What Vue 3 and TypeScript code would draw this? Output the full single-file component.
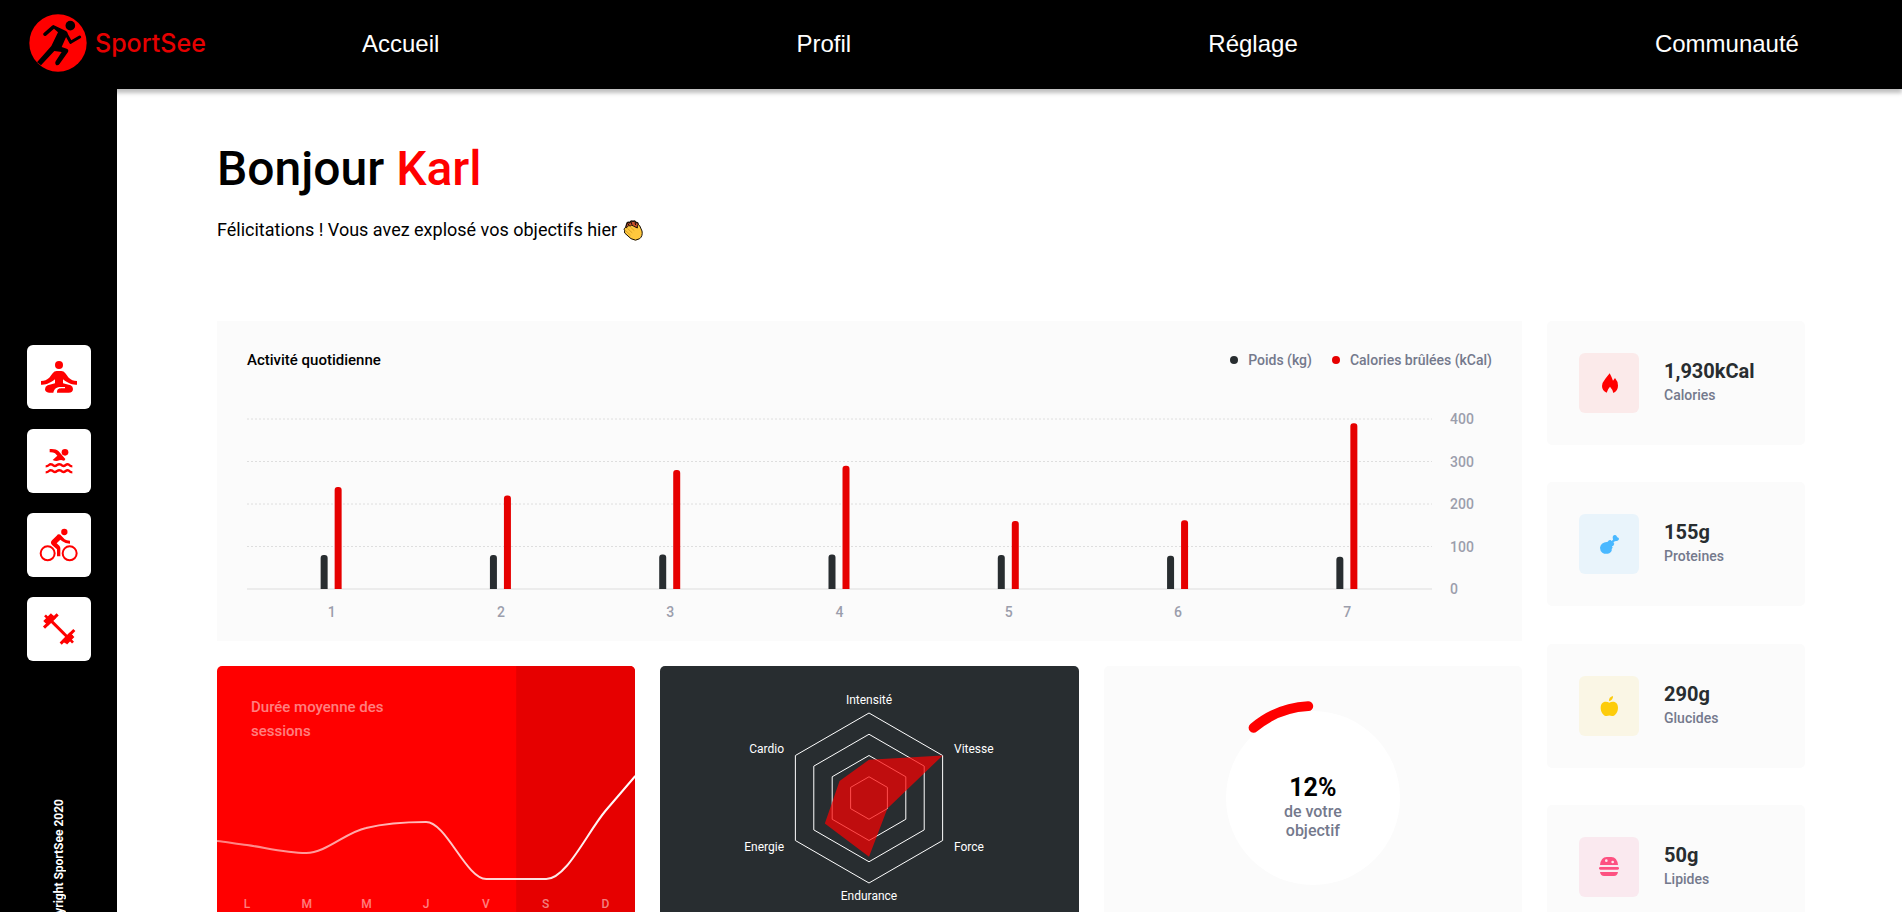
<script setup lang="ts">
interface Day { day: number; kg: number; kcal: number }
interface Fact { value: string; label: string; kind: 'calories' | 'proteins' | 'carbs' | 'fat' }

const links: string[] = ['Accueil', 'Profil', 'Réglage', 'Communauté']

const days: Day[] = [
  { day: 1, kg: 80, kcal: 240 },
  { day: 2, kg: 80, kcal: 220 },
  { day: 3, kg: 81, kcal: 280 },
  { day: 4, kg: 81, kcal: 290 },
  { day: 5, kg: 80, kcal: 160 },
  { day: 6, kg: 78, kcal: 162 },
  { day: 7, kg: 76, kcal: 390 },
]
const ticks: number[] = [400, 300, 200, 100, 0]
const plotTop = 10
const plotHeight = 170
const yOf = (v: number): number => plotTop + plotHeight * (1 - v / 400)
const center = (i: number): string => `${((i + 0.5) * 100) / days.length}%`
const bar = (x: number, v: number): string => {
  const top = yOf(v)
  return `M${x} ${yOf(0)}V${top + 3}a3 3 0 0 1 3 -3h1a3 3 0 0 1 3 3V${yOf(0)}Z`
}

const weekdays: string[] = ['L', 'M', 'M', 'J', 'V', 'S', 'D']

const radius = 85
const point = (i: number, r: number): string => {
  const a = (Math.PI / 3) * i
  return `${(r * Math.sin(a)).toFixed(2)},${(-r * Math.cos(a)).toFixed(2)}`
}
const hexagon = (ratio: number): string => [0, 1, 2, 3, 4, 5].map((i) => point(i, radius * ratio)).join(' ')
const rings: number[] = [0.25, 0.5, 0.75, 1]
const scores: number[] = [0.45, 1, 0.25, 0.69, 0.6, 0.4]
const radarShape = scores.map((s, i) => point(i, radius * s)).join(' ')

const score = 12
const arcPoint = (deg: number): string => {
  const a = (deg * Math.PI) / 180
  return `${(-92 * Math.sin(a)).toFixed(2)} ${(-92 * Math.cos(a)).toFixed(2)}`
}
const arc = `M${arcPoint(3)}A92 92 0 0 0 ${arcPoint(score * 3.6 - 3)}`

const facts: Fact[] = [
  { value: '1,930kCal', label: 'Calories', kind: 'calories' },
  { value: '155g', label: 'Proteines', kind: 'proteins' },
  { value: '290g', label: 'Glucides', kind: 'carbs' },
  { value: '50g', label: 'Lipides', kind: 'fat' },
]
</script>

<template>
  <div class="page">
    <header class="topbar">
      <a class="brand" href="#">
        <svg class="brand-mark" viewBox="86 42 174 174" aria-hidden="true">
          <circle cx="173" cy="129" r="86" fill="#ff0000" />
          <circle cx="210" cy="77" r="14.500" />
          <path d="M159 75L197 93Q203 96 201 103L184 141L199 146Q206 149 203 156L178 191Q173 198 167 195Q162 191 166 184L184 156L162 153L122 196L110 187L153 138L173 97L161 86L137 107Q132 109 129 105Q127 101 131 98L155 77Z" />
          <path d="M197 101L211 127L238 111" fill="none" stroke="#000" stroke-width="9" stroke-linecap="round" stroke-linejoin="round" />
        </svg>
        <span>SportSee</span>
      </a>
      <nav class="nav">
        <a v-for="link in links" :key="link" href="#">{{ link }}</a>
      </nav>
    </header>

    <div class="body">
      <aside class="sidebar">
        <div class="sports">
          <button type="button" aria-label="Yoga">
            <svg viewBox="81 45 192 192">
              <circle cx="177" cy="105" r="12" />
              <path d="M123 153C145 153 150 140 158 130Q163 123 170 123H184Q191 123 196 130C204 140 209 153 231 153V164C212 165 203 158 189 148V160L212 166Q219 169 219 177Q219 188 206 188H171C171 178 175 176 183 175H195V171H183C170 171 163 176 160 188H147Q135 187 135 178Q135 169 143 166L165 160V148C151 158 142 165 123 164Z" />
            </svg>
          </button>
          <button type="button" aria-label="Natation">
            <svg viewBox="81 297 192 192">
              <circle cx="195" cy="367" r="10" />
              <path d="M149 357C162 356 170 358 176 364L196 387Q196 392 190 392Q184 388 178 391Q168 395 158 390L172 377L165 370Q158 366 149 367Z" />
              <path d="M137 409Q143 409 147 405Q151 401 157 404Q164 411 171 405Q177 401 183 404Q190 411 197 405Q202 401 207 404Q211 409 217 409M137 427Q143 427 147 423Q151 419 157 422Q164 429 171 423Q177 419 183 422Q190 429 197 423Q202 419 207 422Q211 427 217 427" fill="none" stroke="#ff0000" stroke-width="7" />
            </svg>
          </button>
          <button type="button" aria-label="Cyclisme">
            <svg viewBox="81 549 192 192">
              <circle cx="193" cy="606" r="9.500" />
              <circle cx="143" cy="670" r="21" fill="none" stroke="#ff0000" stroke-width="6" />
              <circle cx="209" cy="670" r="21" fill="none" stroke="#ff0000" stroke-width="6" />
              <path d="M176 613Q181 613 184 617L194 628Q199 632 210 632V641Q195 641 187 634L181 629L170 640L178 647Q181 650 181 655V679H171V658L157 646Q149 639 156 631L170 617Q173 613 176 613Z" />
            </svg>
          </button>
          <button type="button" aria-label="Musculation">
            <svg viewBox="81 801 192 192">
              <g fill="none" stroke="#ff0000">
                <path d="M146 865L208 927" stroke-width="9" />
                <path d="M132 893L173 853M182 941L223 900" stroke-width="9" />
                <path d="M139 882L163 859M191 936L214 912" stroke-width="14" />
                <path d="M133 876L156 853M198 940L220 918" stroke-width="9" />
                <path d="M135 856L148 869M207 925L219 938" stroke-width="8" />
              </g>
            </svg>
          </button>
        </div>
        <p class="copyright">Copyright SportSee 2020</p>
      </aside>

      <main class="main">
        <h1>Bonjour <span>Karl</span></h1>
        <p class="congrats">
          Félicitations ! Vous avez explosé vos objectifs hier
          <svg class="clap" viewBox="0 0 60 63" role="img" aria-label="Applaudissements">
            <path d="M7 25L12 9Q16 5 20 8Q24 1 30 4Q36 1 39 8Q45 6 46 14L48 24Z" fill="#c8502d" stroke="#181008" stroke-width="4" />
            <path d="M14 10l4 6M24 6l3 8M36 8l2 7" stroke="#181008" stroke-width="3" />
            <path d="M4 26Q6 21 11 23L14 19Q17 15 22 18Q26 13 31 18L43 24L43 17Q46 12 50 17L57 33Q60 48 50 56Q38 65 24 56L6 40Q2 36 6 32Q1 30 4 26Z" fill="#ffc83d" stroke="#181008" stroke-width="3" stroke-linejoin="round" />
            <path d="M14 26L27 38M10 34L22 45M23 22L33 31" fill="none" stroke="#c98f1e" stroke-width="2" stroke-linecap="round" />
          </svg>
        </p>

        <div class="dashboard">
          <section class="activity">
            <div class="activity-head">
              <h2>Activité quotidienne</h2>
              <ul class="legend">
                <li class="weight">Poids (kg)</li>
                <li class="burnt">Calories brûlées (kCal)</li>
              </ul>
            </div>
            <div class="plot">
              <svg class="bars" aria-label="Poids et calories par jour">
                <line v-for="t in ticks" :key="t" x1="0" x2="100%" :y1="yOf(t)" :y2="yOf(t)" :class="t ? 'grid-line' : 'base-line'" />
                <svg v-for="(d, i) in days" :key="d.day" :x="center(i)" overflow="visible">
                  <path :d="bar(-11, d.kg)" fill="#282d30" />
                  <path :d="bar(3, d.kcal)" fill="#e60000" />
                  <text y="208" text-anchor="middle">{{ d.day }}</text>
                </svg>
              </svg>
              <svg class="axis" aria-hidden="true">
                <text v-for="t in ticks" :key="t" x="0" :y="yOf(t) + 5">{{ t }}</text>
              </svg>
            </div>
          </section>

          <section class="card sessions">
            <svg class="curve" viewBox="0 0 418 263" preserveAspectRatio="none" aria-hidden="true">
              <defs>
                <linearGradient id="fade" gradientUnits="userSpaceOnUse" x1="0" y1="0" x2="418" y2="0">
                  <stop offset="0" stop-color="#fff" stop-opacity="0.500" />
                  <stop offset="1" stop-color="#fff" />
                </linearGradient>
              </defs>
              <rect x="299" width="119" height="263" fill="#e60000" />
              <path d="M0 175C10 176 20 178 30 179C50 182 69 187 89 187C109 187 129 166 149 162C169 157 189 156 209 156C229 156 249 213 269 213H329C349 213 369 168 388 145L418 110" fill="none" stroke="url(#fade)" stroke-width="2" vector-effect="non-scaling-stroke" />
            </svg>
            <h2>Durée moyenne des sessions</h2>
            <div class="weekdays">
              <span v-for="(d, i) in weekdays" :key="i">{{ d }}</span>
            </div>
          </section>

          <section class="card radar">
            <svg viewBox="-150 -132 300 263" width="300" height="263" aria-label="Performances">
              <polygon v-for="r in rings" :key="r" :points="hexagon(r)" fill="none" stroke="#fff" />
              <polygon :points="radarShape" fill="#ff0000" fill-opacity="0.700" />
              <g class="radar-labels">
                <text x="0" y="-94" text-anchor="middle">Intensité</text>
                <text x="85" y="-45">Vitesse</text>
                <text x="85" y="53">Force</text>
                <text x="0" y="102" text-anchor="middle">Endurance</text>
                <text x="-85" y="53" text-anchor="end">Energie</text>
                <text x="-85" y="-45" text-anchor="end">Cardio</text>
              </g>
            </svg>
          </section>

          <section class="card goal">
            <svg viewBox="-100 -100 200 200" width="200" height="200" aria-hidden="true">
              <circle r="87" fill="#fff" />
              <path :d="arc" fill="none" stroke="#ff0000" stroke-width="10" stroke-linecap="round" />
            </svg>
            <p><strong>{{ score }}%</strong>de votre<br>objectif</p>
          </section>

          <div class="facts">
            <article v-for="f in facts" :key="f.kind" class="fact">
              <div class="fact-icon" :class="f.kind">
                <svg v-if="f.kind === 'calories'" viewBox="117 114 180 180" aria-hidden="true">
                  <path d="M209 175L196 191Q186 203 186 213Q186 227 200 233Q203 222 210 215Q217 222 220 234Q234 227 234 212Q234 199 225 189L219 197Q215 186 209 175Z" />
                </svg>
                <svg v-else-if="f.kind === 'proteins'" viewBox="117 597 180 180" aria-hidden="true">
                  <path d="M186 686Q194 680 202 681L207 676L212 675L218 681L223 686L220 692L216 694L218 698L215 702Q217 709 208 715Q196 719 187 713Q180 707 180 698Q181 690 186 686Z" />
                  <path d="M210 683L219 674Q217 667 219 663Q223 658 228 661L232 667Q238 668 237 673Q234 679 229 678L224 679L215 689Z" />
                </svg>
                <svg v-else-if="f.kind === 'carbs'" viewBox="117 138 180 180" aria-hidden="true">
                  <path d="M208 218C200 214 183 212 182 233C182 246 190 258 200 258Q208 255 216 258C226 258 234 246 234 233C233 212 216 214 208 218Z" />
                  <path d="M207 214Q206 201 219 198Q220 210 207 214Z" />
                </svg>
                <svg v-else viewBox="117 621 180 180" aria-hidden="true">
                  <path fill-rule="evenodd" d="M180 705Q183 681 200 681H214Q231 681 234 705ZM199 688a4 4 0 1 0 0 8a4 4 0 1 0 0 -8ZM218 692a4 4 0 1 0 0 8a4 4 0 1 0 0 -8Z" />
                  <rect x="177" y="711" width="60" height="8" rx="4" />
                  <path d="M180 726H234Q232 738 222 738H192Q182 738 180 726Z" />
                </svg>
              </div>
              <p><strong>{{ f.value }}</strong>{{ f.label }}</p>
            </article>
          </div>
        </div>
      </main>
    </div>
  </div>
</template>

<style>
body {
  margin: 0;
  background: #fff;
}
</style>

<style scoped>
.page {
  font-family: Roboto, 'Liberation Sans', sans-serif;
  color: #000;
}
h1, h2, p, ul {
  margin: 0;
  padding: 0;
}
.topbar {
  position: relative;
  display: flex;
  align-items: center;
  height: 89px;
  padding: 0 103px 3px 29px;
  box-sizing: border-box;
  background: #000;
  box-shadow: 0 4px 4px rgba(0, 0, 0, 0.25);
}
.brand {
  display: flex;
  align-items: center;
  gap: 8px;
  width: 333px;
  color: #e60000;
  font-family: Inter, Roboto, sans-serif;
  font-size: 25px;
  font-weight: 500;
  text-decoration: none;
}
.brand-mark {
  width: 58px;
  height: 58px;
}
.nav {
  flex: 1;
  display: flex;
  justify-content: space-between;
  padding-top: 2px;
}
.nav a {
  color: #fff;
  font: 24px/28px 'Liberation Sans', Arial, sans-serif;
  text-decoration: none;
}
.body {
  display: flex;
}
.sidebar {
  position: relative;
  flex: none;
  width: 117px;
  background: #000;
  display: flex;
  flex-direction: column;
  align-items: center;
}
.sports {
  display: grid;
  gap: 20px;
  margin: 256px 0 138px;
}
.sports button {
  width: 64px;
  height: 64px;
  padding: 0;
  border: 0;
  border-radius: 6px;
  background: #fff;
  cursor: pointer;
}
.sports svg {
  display: block;
  width: 64px;
  height: 64px;
  fill: #ff0000;
}
.copyright {
  color: #fff;
  font-size: 12px;
  line-height: 24px;
  font-weight: 700;
  white-space: nowrap;
  writing-mode: vertical-rl;
  transform: rotate(180deg);
}
.main {
  flex: 1;
  min-width: 0;
  padding: 52px 97px 20px 100px;
}
h1 {
  font-size: 48px;
  line-height: 56px;
  font-weight: 500;
}
h1 span {
  color: #ff0000;
}
.congrats {
  display: flex;
  align-items: center;
  gap: 6px;
  margin: 21px 0 79px;
  font-size: 18px;
  line-height: 24px;
}
.clap {
  width: 20px;
  height: 21px;
}
.dashboard {
  display: grid;
  grid-template-columns: repeat(3, minmax(0, 1fr)) 258px;
  grid-template-rows: auto auto;
  gap: 25px;
}
.activity {
  grid-column: 1 / 4;
  height: 320px;
  padding: 29px 30px 0;
  box-sizing: border-box;
  background: #fbfbfb;
}
.activity-head {
  display: flex;
  justify-content: space-between;
  align-items: center;
}
h2 {
  font-size: 15px;
  line-height: 24px;
  font-weight: 500;
}
.activity h2 {
  line-height: 20px;
}
.legend {
  display: flex;
  gap: 20px;
  list-style: none;
  color: #74798c;
  font-size: 14px;
  line-height: 20px;
  font-weight: 500;
}
.legend li {
  display: flex;
  align-items: center;
  gap: 10px;
}
.legend li::before {
  content: '';
  width: 8px;
  height: 8px;
  border-radius: 50%;
  background: #282d30;
}
.legend .burnt::before {
  background: #e60000;
}
.plot {
  display: flex;
  gap: 18px;
  margin-top: 39px;
  font-size: 14px;
  font-weight: 500;
}
.plot text {
  fill: #9b9eac;
}
.bars {
  flex: 1;
  min-width: 0;
  height: 220px;
}
.axis {
  width: 42px;
  height: 220px;
}
.grid-line {
  stroke: #dedede;
  stroke-dasharray: 2 2;
}
.base-line {
  stroke: #ececec;
  stroke-width: 2px;
}
.card {
  height: 263px;
  border-radius: 5px;
  overflow: hidden;
}
.sessions {
  position: relative;
  background: #ff0000;
}
.curve {
  position: absolute;
  inset: 0;
  width: 100%;
  height: 100%;
}
.sessions h2 {
  position: relative;
  width: 150px;
  margin: 29px 34px 0;
  color: rgba(255, 255, 255, 0.5);
}
.weekdays {
  position: relative;
  display: grid;
  grid-template-columns: repeat(7, 1fr);
  margin-top: 153px;
  color: rgba(255, 255, 255, 0.5);
  font-size: 12px;
  line-height: 16px;
  font-weight: 500;
  text-align: center;
}
.radar {
  display: flex;
  justify-content: center;
  background: #282d30;
}
.radar-labels {
  fill: #fff;
  font-size: 12px;
}
.goal {
  display: grid;
  place-items: center;
  background: #fbfbfb;
}
.goal svg,
.goal p {
  grid-area: 1 / 1;
}
.goal p {
  margin-top: 17px;
  color: #74798c;
  font-size: 16px;
  line-height: 19px;
  font-weight: 500;
  text-align: center;
}
.goal strong {
  display: block;
  color: #000;
  font-size: 25px;
  line-height: 29px;
  font-weight: 700;
}
.facts {
  grid-column: 4;
  grid-row: 1 / 3;
  display: flex;
  flex-direction: column;
  justify-content: space-between;
}
.fact {
  display: flex;
  gap: 25px;
  padding: 32px;
  border-radius: 5px;
  background: #fbfbfb;
}
.fact-icon {
  width: 60px;
  height: 60px;
  border-radius: 6px;
}
.fact-icon svg {
  display: block;
  width: 60px;
  height: 60px;
}
.calories {
  background: #fbeaea;
  fill: #ff0000;
}
.proteins {
  background: #e9f4fb;
  fill: #4ab8ff;
}
.carbs {
  background: #faf6e5;
  fill: #fdcc0c;
}
.fat {
  background: #fae9ef;
  fill: #fd5181;
}
.fact p {
  padding-top: 6px;
  color: #74798c;
  font-size: 14px;
  line-height: 24px;
  font-weight: 500;
}
.fact strong {
  display: block;
  color: #282d30;
  font-size: 20px;
  line-height: 24px;
  font-weight: 700;
}
</style>
